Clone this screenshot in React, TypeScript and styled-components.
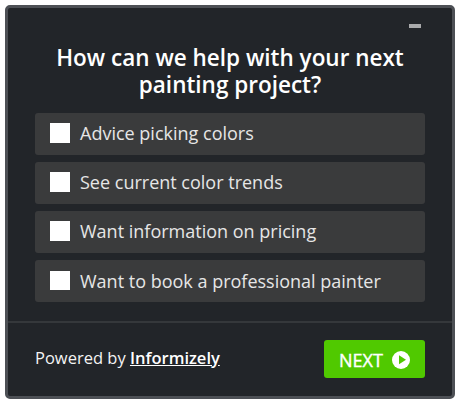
import React from "react";
import styled, { createGlobalStyle } from "styled-components";

const GlobalStyle = createGlobalStyle`
  *, *::before, *::after { box-sizing: border-box; }
  body { margin: 0; background: #fff; font-family: "Open Sans", "Noto Sans", sans-serif; }
`;

const Card = styled.section`
  display: flex;
  flex-direction: column;
  width: 450px;
  height: 394px;
  margin: 5px;
  border: 3px solid #4d5055;
  border-radius: 5px;
  background: #222529;
  color: #fff;
`;

const TitleBar = styled.header`
  display: flex;
  justify-content: flex-end;
  height: 36px;
  padding: 16px 31px 0 0;
`;

const Minimize = styled.button`
  width: 12px;
  height: 4px;
  padding: 0;
  border: 0;
  background: #a9aaab;
`;

const Question = styled.h1`
  height: 69px;
  margin: 0;
  text-align: center;
  font-size: 22.5px;
  line-height: 27px;
  font-weight: 600;
`;

const Options = styled.div`
  display: grid;
  gap: 7.15px;
  padding: 0 27px;
`;

const Option = styled.label`
  display: flex;
  align-items: flex-start;
  gap: 10px;
  height: 42px;
  padding: 0 15px;
  border-radius: 3px;
  background: #3a3b3c;
  color: #e6e6e6;
  font-size: 18px;
  line-height: 41.2px;
  white-space: nowrap;
`;

const OptionText = styled.span`
  padding-top: 0.1px;
`;

const Checkbox = styled.input.attrs({ type: "checkbox" })`
  appearance: none;
  width: 20px;
  height: 19.8px;
  margin: 10.1px 0 0;
  background: #fff;
`;

const Footer = styled.footer`
  display: flex;
  align-items: flex-start;
  justify-content: space-between;
  height: 75px;
  margin-top: auto;
  padding: 17px 27px 0;
  border-top: 2px solid #35383b;
`;

const Credit = styled.div`
  font-size: 16.5px;
  line-height: 36px;
  color: #f4f4f4;
`;

const CreditLink = styled.a`
  color: #fff;
  font-weight: 600;
  text-decoration: underline;
`;

const NextButton = styled.button`
  display: flex;
  align-items: center;
  justify-content: space-between;
  width: 101px;
  height: 38px;
  padding: 1px 15px 0;
  border: 0;
  border-radius: 3px;
  background: #50c900;
  color: #fff;
  font: 400 18px/36px "Open Sans", sans-serif;
  -webkit-text-stroke: 0.4px #fff;
`;

const options = [
  "Advice picking colors",
  "See current color trends",
  "Want information on pricing",
  "Want to book a professional painter",
];

export default function App() {
  return (
    <>
      <GlobalStyle />
      <Card>
        <TitleBar>
          <Minimize aria-label="Minimize" />
        </TitleBar>
        <Question>
          How can we help with your next
          <br />
          painting project?
        </Question>
        <Options>
          {options.map((text) => (
            <Option key={text}>
              <Checkbox />
              <OptionText>{text}</OptionText>
            </Option>
          ))}
        </Options>
        <Footer>
          <Credit>
            Powered by <CreditLink href="#">Informizely</CreditLink>
          </Credit>
          <NextButton>
            NEXT
            <svg width="18" height="18" viewBox="0 0 18 18" aria-hidden="true">
              <circle cx="9" cy="9" r="9" fill="#fff" />
              <path d="M7 4.2 L14 8.7 L7 13.2 Z" fill="#50c900" />
            </svg>
          </NextButton>
        </Footer>
      </Card>
    </>
  );
}
